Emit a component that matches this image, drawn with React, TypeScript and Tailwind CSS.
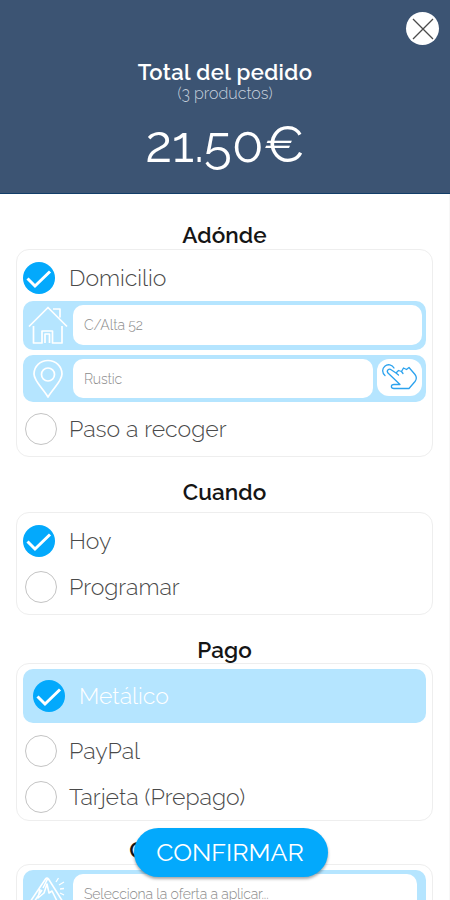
import React, { useState } from 'react';
import { clsx } from 'clsx';

function HouseIcon() {
  return (
    <svg viewBox="0 0 40 40" className="w-10 h-10" fill="none" stroke="white" strokeWidth="1.7" strokeLinejoin="round">
      <path d="M1 21.500 20 2.500l19 19M5.500 21v17h8.500V26h10.500v12H34V21M17 38V29h4.500v9M25 4h7v8.500" />
    </svg>
  );
}

function PinIcon() {
  return (
    <svg viewBox="0 0 40 40" className="w-10 h-10" fill="none" stroke="white" strokeWidth="1.7" strokeLinejoin="round">
      <path d="M20 38C15 29.500 6 22 6 15a14 13.500 0 0 1 28 0c0 7-9 14.500-14 23Z" />
      <circle cx="20" cy="15.500" r="6.500" />
    </svg>
  );
}

function MountainIcon() {
  return (
    <svg viewBox="0 0 40 40" className="w-10 h-10" fill="none" stroke="white" strokeWidth="1.600" strokeLinejoin="round">
      <path d="M2 28 17.500 5q1.500-2 3 0L35 28M6 28l8-12M12 15l-2 9 6-5 3-9 2 9 3-2 5 10M20 4l-5 10" />
      <path d="M28 8l2.500-4M31 11l5-3M32 15l4-.5M32 19l4 2" strokeWidth="1.300" />
    </svg>
  );
}

function TouchIcon() {
  return (
    <svg viewBox="0 0 40 30" className="w-10 h-[30px]" fill="none" stroke="#2ba2ee" strokeWidth="1.300" strokeLinejoin="round" strokeLinecap="round">
      <path d="M5 12.500a6 6 0 1 1 9-7.500" />
      <path d="M8 10c-2-2.500 1-5 3.500-3l4.500 3 2.500-2.500 3 1L23.500 5l3 1.500L29 4.500l6 7c1.500 2 1.500 5 0 7L29 25.500H14c-3.500 0-3.500-4 0-4h6L8 10M16 10l2.500 2M21.500 8.500l1.500 2" />
    </svg>
  );
}

function Radio({ checked }: { checked: boolean }) {
  if (!checked) {
    return <span className="ml-0.5 w-8 h-8 shrink-0 rounded-full border border-[#c4c4c4] bg-white" />;
  }
  return (
    <span className="mr-0.5 w-8 h-8 shrink-0 rounded-full bg-[#03a9fc]">
      <svg viewBox="0 0 32 32" className="w-8 h-8" fill="none" stroke="white" strokeWidth="3">
        <path d="M4.500 16.500 12 24 27 9.500" />
      </svg>
    </span>
  );
}

interface OptionProps {
  label: string;
  checked: boolean;
  onSelect: () => void;
  className?: string;
  labelClass?: string;
}

function Option({ label, checked, onSelect, className, labelClass = 'text-[#4a4a4a]' }: OptionProps) {
  return (
    <button onClick={onSelect} className={clsx('flex w-full items-center gap-3 text-left', className)}>
      <Radio checked={checked} />
      <span className={clsx('whitespace-nowrap text-[23px] leading-8 font-light', labelClass)}>{label}</span>
    </button>
  );
}

interface FieldProps {
  icon: React.ReactNode;
  text: string;
  className: string;
  action?: React.ReactNode;
}

function Field({ icon, text, className, action }: FieldProps) {
  return (
    <div className={clsx('flex rounded-[10px] bg-[#b5e5ff]', className)}>
      <div className="flex w-[50px] shrink-0 items-center justify-center">{icon}</div>
      <div className="flex flex-1 items-center rounded-[10px] bg-white pl-[11px]">
        <span className="whitespace-nowrap text-[14px] leading-5 font-light tracking-[-0.150px] text-[#8b8b8b]">{text}</span>
      </div>
      {action}
    </div>
  );
}

const card = 'mx-4 w-[417px] rounded-[13px] border border-[#eeeeee] px-1.5';
const heading = 'text-center text-[22.500px] leading-[26px] font-semibold tracking-[0.100px] text-[#151515]';

export default function App() {
  const [where, setWhere] = useState('domicilio');
  const [when, setWhen] = useState('hoy');
  const [payment, setPayment] = useState('metalico');

  return (
    <div className="relative h-[900px] w-[450px] overflow-hidden bg-white font-['Raleway','Lato',sans-serif]">
      <header className="flex h-[194px] flex-col items-center border-b border-[#123e68] bg-[#3c5473] text-white">
        <button aria-label="Cerrar" className="mt-3 mr-[11px] flex h-[33px] w-[33px] items-center justify-center self-end rounded-full bg-white">
          <svg viewBox="0 0 22 22" className="h-[22px] w-[22px]" stroke="#4b4b4b" strokeWidth="1.300">
            <path d="M1 1l20 20M21 1 1 21" />
          </svg>
        </button>
        <h1 className="mt-[13px] text-[22px] leading-[28px] font-semibold tracking-[0.4px]">Total del pedido</h1>
        <p className="text-base leading-[15px] font-light text-[#c6d0dd]">(3 productos)</p>
        <p className="mt-[15px] text-[51.500px] leading-[56px]">21.50€</p>
      </header>

      <main className="border-r border-[#f7f7f7] pt-[28px]">
        <h2 className={heading}>Adónde</h2>
        <section className={clsx(card, 'mt-px h-[208px] pt-3')}>
          <Option label="Domicilio" checked={where === 'domicilio'} onSelect={() => setWhere('domicilio')} />
          <Field icon={<HouseIcon />} text="C/Alta 52" className="mt-[7px] h-[49px] pt-1 pr-1 pb-[5px]" />
          <Field
            icon={<PinIcon />}
            text="Rustic"
            className="mt-[5px] h-[47px] pt-1 pr-1 pb-1"
            action={
              <button aria-label="Elegir en el mapa" className="ml-1 flex h-[37px] w-[45px] items-center justify-center rounded-[12px] bg-white">
                <TouchIcon />
              </button>
            }
          />
          <Option label="Paso a recoger" checked={where === 'recoger'} onSelect={() => setWhere('recoger')} className="mt-[11px]" />
        </section>

        <h2 className={clsx(heading, 'mt-[22px]')}>Cuando</h2>
        <section className={clsx(card, 'mt-[7px] h-[103px] pt-3')}>
          <Option label="Hoy" checked={when === 'hoy'} onSelect={() => setWhen('hoy')} />
          <Option label="Programar" checked={when === 'programar'} onSelect={() => setWhen('programar')} className="mt-[14px]" />
        </section>

        <h2 className={clsx(heading, 'mt-[22px]')}>Pago</h2>
        <section className={clsx(card, 'h-[158px] pt-[5px]')}>
          <Option
            label="Metálico"
            checked={payment === 'metalico'}
            onSelect={() => setPayment('metalico')}
            className="h-[54px] rounded-[10px] bg-[#b5e5ff] pl-2.5"
            labelClass="text-white"
          />
          <Option label="PayPal" checked={payment === 'paypal'} onSelect={() => setPayment('paypal')} className="mt-3" />
          <Option label="Tarjeta (Prepago)" checked={payment === 'tarjeta'} onSelect={() => setPayment('tarjeta')} className="mt-[14px]" />
        </section>

        <h2 className={clsx(heading, 'mt-[16px]')}>Cupón descuento</h2>
        <section className={clsx(card, 'mt-px h-[70px] pt-[5px]')}>
          <Field icon={<MountainIcon />} text="Selecciona la oferta a aplicar..." className="h-[48px] pt-1 pr-[9px] pb-1" />
        </section>
      </main>

      <button className="absolute top-[828px] left-[134px] flex h-[49px] w-[194px] items-center justify-center rounded-full bg-[#03a9fc] pr-0.5 text-[25px] text-white shadow-[0_2px_3px_rgba(0,0,0,0.35)]">
        CONFIRMAR
      </button>
    </div>
  );
}
